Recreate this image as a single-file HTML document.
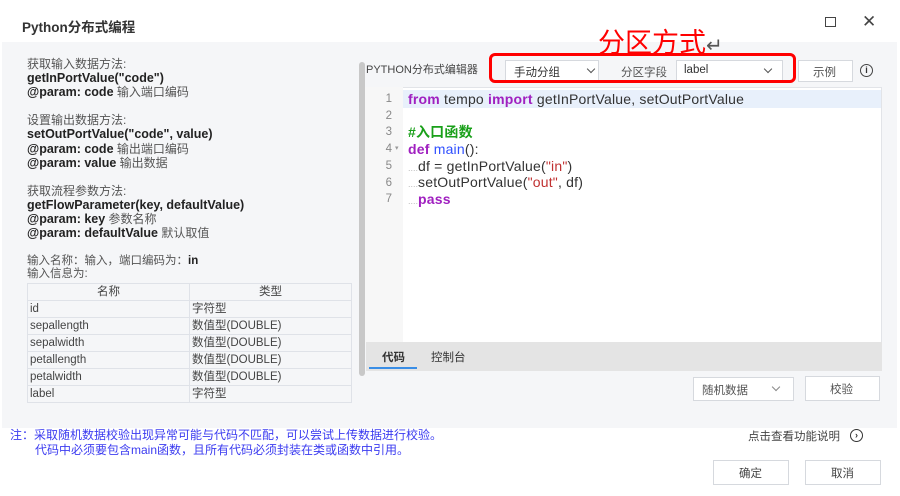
<!DOCTYPE html>
<html><head><meta charset="utf-8"><style>
*{box-sizing:border-box;margin:0;padding:0}
body{width:900px;height:496px;background:#fff;font-family:"Liberation Sans","Noto Sans CJK SC",sans-serif;color:#333;position:relative;overflow:hidden;font-size:11px}
.a{position:absolute;white-space:nowrap}
.b{font-weight:bold;color:#222}
.box{position:absolute;border:1px solid #d6d9de;background:#fff}
table{border-collapse:collapse;position:absolute;left:27px;top:283px;width:325px;font-size:11.5px}
td{border:1px solid #dfe2e8;height:17px;padding:0 2px;color:#444;line-height:15px}
.code div{height:16.7px;line-height:16.7px;font-size:14px;letter-spacing:0.2px}
.kw{color:#a020c0;font-weight:bold}
.fn{color:#3050ff}
.str{color:#c03030}
.cm{color:#1aa01a;font-weight:bold}
.dt{color:#bbb;font-size:9px;letter-spacing:0}
.chev{position:absolute;width:6px;height:6px;border-right:1px solid #555;border-bottom:1px solid #555;transform:rotate(45deg)}
</style></head><body>
<div class="a b" style="left:22px;top:16px;font-size:13.5px;color:#333">Python分布式编程</div>
<div class="a" style="left:825px;top:17px;width:11px;height:10px;border:1.5px solid #444"></div>
<div class="a" style="left:862px;top:12px;font-size:17px;color:#444">✕</div>
<div class="a" style="left:2px;top:42px;width:895px;height:386px;background:#f5f6f8"></div>

<div class="a" style="left:27px;top:57px;line-height:14.1px;font-size:12px;color:#555">
获取输入数据方法:<br><span class="b" style="font-size:12.5px">getInPortValue("code")</span><br><span class="b" style="font-size:12.5px">@param: code</span> 输入端口编码<br><br>
设置输出数据方法:<br><span class="b" style="font-size:12.5px">setOutPortValue("code", value)</span><br><span class="b" style="font-size:12.5px">@param: code</span> 输出端口编码<br><span class="b" style="font-size:12.5px">@param: value</span> 输出数据<br><br>
获取流程参数方法:<br><span class="b" style="font-size:12.5px">getFlowParameter(key, defaultValue)</span><br><span class="b" style="font-size:12.5px">@param: key</span> 参数名称<br><span class="b" style="font-size:12.5px">@param: defaultValue</span> 默认取值</div>
<div class="a" style="left:27px;top:255px;font-size:11.5px;color:#555;line-height:13px">输入名称：输入，端口编码为：<b style="color:#222">in</b><br>输入信息为:</div>
<table>
<tr><td style="text-align:center;width:162px">名称</td><td style="text-align:center">类型</td></tr>
<tr><td>id</td><td>字符型</td></tr>
<tr><td>sepallength</td><td>数值型(DOUBLE)</td></tr>
<tr><td>sepalwidth</td><td>数值型(DOUBLE)</td></tr>
<tr><td>petallength</td><td>数值型(DOUBLE)</td></tr>
<tr><td>petalwidth</td><td>数值型(DOUBLE)</td></tr>
<tr><td>label</td><td>字符型</td></tr>
</table>

<div class="a" style="left:359px;top:62px;width:6px;height:314px;background:#c8c8c8;border-radius:3px"></div>
<div class="a" style="left:366px;top:61px;font-size:11px;color:#444">PYTHON分布式编辑器</div>
<div class="box" style="left:505px;top:60px;width:94px;height:22px"></div>
<div class="a" style="left:514px;top:64px;font-size:11.5px">手动分组</div><div class="chev" style="left:588px;top:66px"></div>
<div class="a" style="left:621px;top:64px;font-size:11.5px;color:#555">分区字段</div>
<div class="box" style="left:676px;top:60px;width:107px;height:22px"></div>
<div class="a" style="left:684px;top:64px;font-size:11.5px">label</div><div class="chev" style="left:765px;top:66px"></div>
<div class="box" style="left:798px;top:60px;width:55px;height:22px"></div>
<div class="a" style="left:813px;top:64px;font-size:11.5px;color:#555">示例</div>
<div class="a" style="left:860px;top:64px;width:13px;height:13px;border:1.5px solid #444;border-radius:50%;font-size:9px;text-align:center;line-height:10px;font-weight:bold">i</div>
<div class="a" style="left:489px;top:53px;width:307px;height:30px;border:3px solid #f00;border-radius:6px"></div>
<div class="a" style="left:598px;top:27px;font-size:27px;color:#f00;line-height:32px">分区方式<span style="color:#555;font-size:20px">↵</span></div>

<div class="a" style="left:365px;top:87px;width:517px;height:256px;background:#fff;border:1px solid #e2e4e8"></div>
<div class="a" style="left:365px;top:87px;width:38px;height:256px;background:#f7f7f7"></div>
<div class="a" style="left:403px;top:90px;width:478px;height:18px;background:#e8f0fb"></div>
<div class="a" style="left:376px;top:91px;color:#888;font-size:11.5px;line-height:16.7px;text-align:right;width:16px">1<br>2<br>3<br>4<br>5<br>6<br>7</div>
<div class="a" style="left:395px;top:144px;font-size:7px;color:#999">▾</div>
<div class="a code" style="left:408px;top:91px;color:#333">
<div><span class="kw">from</span> tempo <span class="kw">import</span> getInPortValue, setOutPortValue</div>
<div></div>
<div class="cm">#入口函数</div>
<div><span class="kw">def</span> <span class="fn">main</span>():</div>
<div><span class="dt">....</span>df = getInPortValue(<span class="str">"in"</span>)</div>
<div><span class="dt">....</span>setOutPortValue(<span class="str">"out"</span>, df)</div>
<div><span class="dt">....</span><span class="kw">pass</span></div>
</div>
<div class="a" style="left:366px;top:342px;width:516px;height:29px;background:#e4e4e4"></div>
<div class="a" style="left:382px;top:349px;font-size:11.5px;font-weight:bold;color:#333">代码</div>
<div class="a" style="left:369px;top:367px;width:48px;height:2px;background:#3a8ee6"></div>
<div class="a" style="left:431px;top:349px;font-size:11.5px;color:#333">控制台</div>
<div class="box" style="left:693px;top:377px;width:101px;height:24px"></div>
<div class="a" style="left:702px;top:382px;font-size:11.5px;color:#555">随机数据</div><div class="chev" style="left:773px;top:384px;border-color:#888"></div>
<div class="box" style="left:805px;top:376px;width:75px;height:25px"></div>
<div class="a" style="left:830px;top:381px;font-size:11.5px;color:#555">校验</div>

<div class="a" style="left:10px;top:428px;font-size:12px;color:#3b3bf0;line-height:15px">注：采取随机数据校验出现异常可能与代码不匹配，可以尝试上传数据进行校验。<br><span style="padding-left:25px">代码中必须要包含main函数，且所有代码必须封装在类或函数中引用。</span></div>
<div class="a" style="left:748px;top:428px;font-size:11.5px;color:#444">点击查看功能说明</div>
<div class="a" style="left:850px;top:429px;width:13px;height:13px;border:1.5px solid #333;border-radius:50%;font-size:9px;text-align:center;line-height:10px;font-weight:bold">›</div>
<div class="box" style="left:713px;top:460px;width:76px;height:25px"></div>
<div class="a" style="left:739px;top:465px;font-size:11.5px;color:#444">确定</div>
<div class="box" style="left:805px;top:460px;width:76px;height:25px"></div>
<div class="a" style="left:831px;top:465px;font-size:11.5px;color:#444">取消</div>
</body></html>
